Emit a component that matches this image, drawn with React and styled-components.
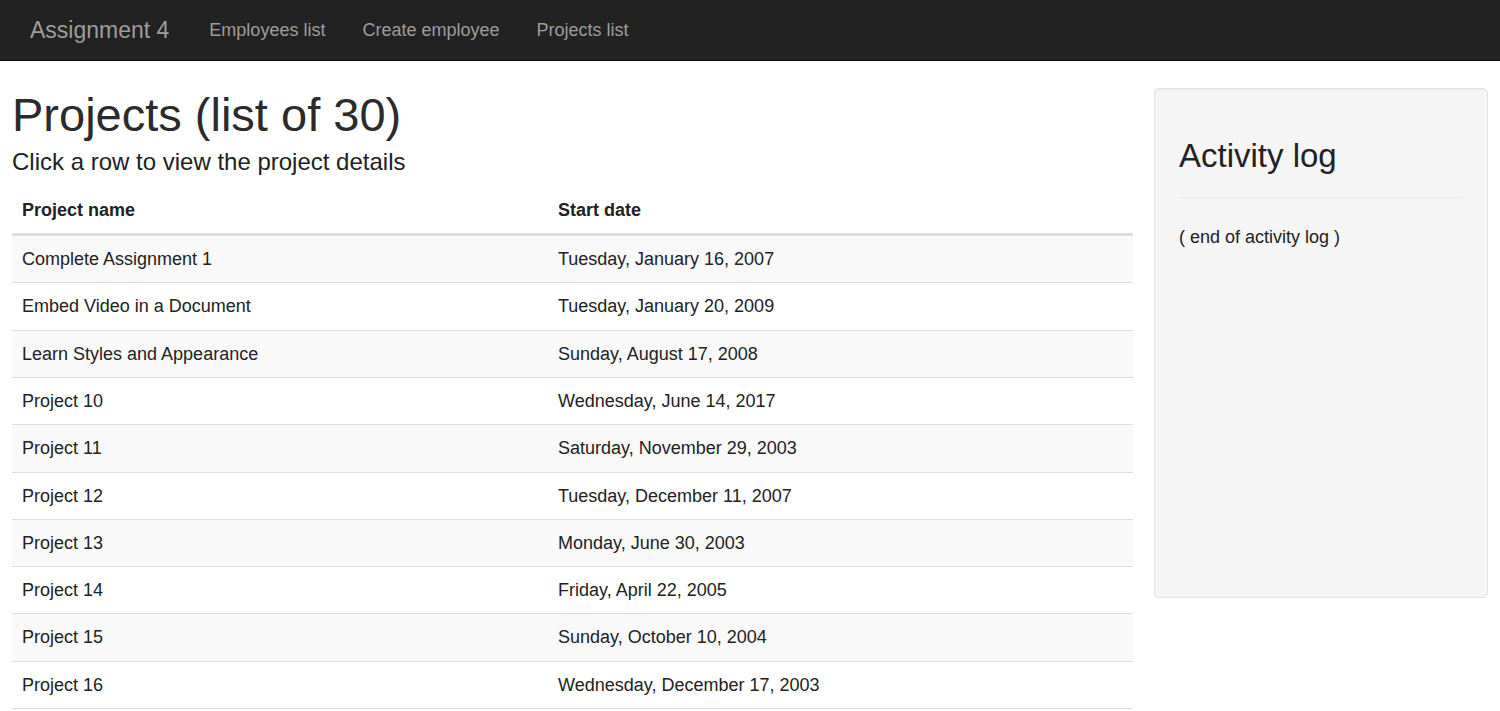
import React from "react";
import styled, { createGlobalStyle } from "styled-components";

const GlobalStyle = createGlobalStyle`
  html, body {
    margin: 0;
    padding: 0;
    background: #fff;
  }
  body {
    font-family: "Liberation Sans", Arial, Helvetica, sans-serif;
    font-size: 18px;
    line-height: 1.43;
    color: #333;
  }
  * {
    box-sizing: border-box;
  }
`;

const projects = [
  { name: "Complete Assignment 1", start: "Tuesday, January 16, 2007" },
  { name: "Embed Video in a Document", start: "Tuesday, January 20, 2009" },
  { name: "Learn Styles and Appearance", start: "Sunday, August 17, 2008" },
  { name: "Project 10", start: "Wednesday, June 14, 2017" },
  { name: "Project 11", start: "Saturday, November 29, 2003" },
  { name: "Project 12", start: "Tuesday, December 11, 2007" },
  { name: "Project 13", start: "Monday, June 30, 2003" },
  { name: "Project 14", start: "Friday, April 22, 2005" },
  { name: "Project 15", start: "Sunday, October 10, 2004" },
  { name: "Project 16", start: "Wednesday, December 17, 2003" },
];

const Navbar = styled.nav`
  height: 61px;
  background: #222;
  border-bottom: 1px solid #080808;
  display: flex;
  align-items: center;
  padding-left: 11px;
`;

const Brand = styled.a`
  padding: 0 21px 0 19px;
  font-size: 23px;
  color: #9d9d9d;
  text-decoration: none;
  line-height: 1;
`;

const NavLink = styled.a`
  padding: 0 19px;
  font-size: 18px;
  color: #9d9d9d;
  text-decoration: none;
  line-height: 1;
  margin-right: -1px;
`;

const Page = styled.div`
  display: flex;
  align-items: flex-start;
  gap: 21px;
  padding: 0 12px;
`;

const Main = styled.main`
  flex: 1;
  min-width: 0;
`;

const Title = styled.h1`
  margin: 28px 0 0;
  font-size: 47px;
  font-weight: 400;
  line-height: 1.1;
  color: #2b2b2b;
`;

const Subtitle = styled.h4`
  margin: 8px 0 12px;
  font-size: 24px;
  font-weight: 400;
  line-height: 1.1;
  color: #222;
`;

const Table = styled.table`
  width: 100%;
  border-collapse: collapse;
  border-spacing: 0;
  table-layout: fixed;
`;

const Th = styled.th`
  width: ${(p) => p.$width || "auto"};
  text-align: left;
  font-weight: 700;
  padding: 10px;
  line-height: 26px;
  border-bottom: 3px solid #ddd;
  color: #222;
`;

const Row = styled.tr`
  background: ${(p) => (p.$striped ? "#f9f9f9" : "#fff")};
  cursor: pointer;
`;

const Td = styled.td`
  padding: 10px;
  line-height: 26.3px;
  border-bottom: 1px solid #ddd;
  color: #222;
`;

const Well = styled.aside`
  width: 334px;
  flex-shrink: 0;
  margin-top: 27px;
  min-height: 510px;
  padding: 24px 24px;
  background: #f5f5f5;
  border: 1px solid #e3e3e3;
  border-radius: 5px;
  box-shadow: inset 0 1px 1px rgba(0, 0, 0, 0.05);
`;

const WellTitle = styled.h3`
  margin: 25px 0 0;
  font-size: 33px;
  font-weight: 400;
  line-height: 1.1;
  color: #222;
`;

const Rule = styled.hr`
  margin: 23px 0 27px;
  border: 0;
  border-top: 1px solid #eaeaea;
`;

const LogEnd = styled.p`
  margin: 0;
  font-size: 18px;
  color: #222;
`;

export default function App() {
  return (
    <>
      <GlobalStyle />
      <Navbar>
        <Brand href="#">Assignment 4</Brand>
        <NavLink href="#">Employees list</NavLink>
        <NavLink href="#">Create employee</NavLink>
        <NavLink href="#">Projects list</NavLink>
      </Navbar>
      <Page>
        <Main>
          <Title>Projects (list of 30)</Title>
          <Subtitle>Click a row to view the project details</Subtitle>
          <Table>
            <thead>
              <tr>
                <Th $width="536px">Project name</Th>
                <Th>Start date</Th>
              </tr>
            </thead>
            <tbody>
              {projects.map((p, i) => (
                <Row key={p.name} $striped={i % 2 === 0}>
                  <Td>{p.name}</Td>
                  <Td>{p.start}</Td>
                </Row>
              ))}
            </tbody>
          </Table>
        </Main>
        <Well>
          <WellTitle>Activity log</WellTitle>
          <Rule />
          <LogEnd>( end of activity log )</LogEnd>
        </Well>
      </Page>
    </>
  );
}
